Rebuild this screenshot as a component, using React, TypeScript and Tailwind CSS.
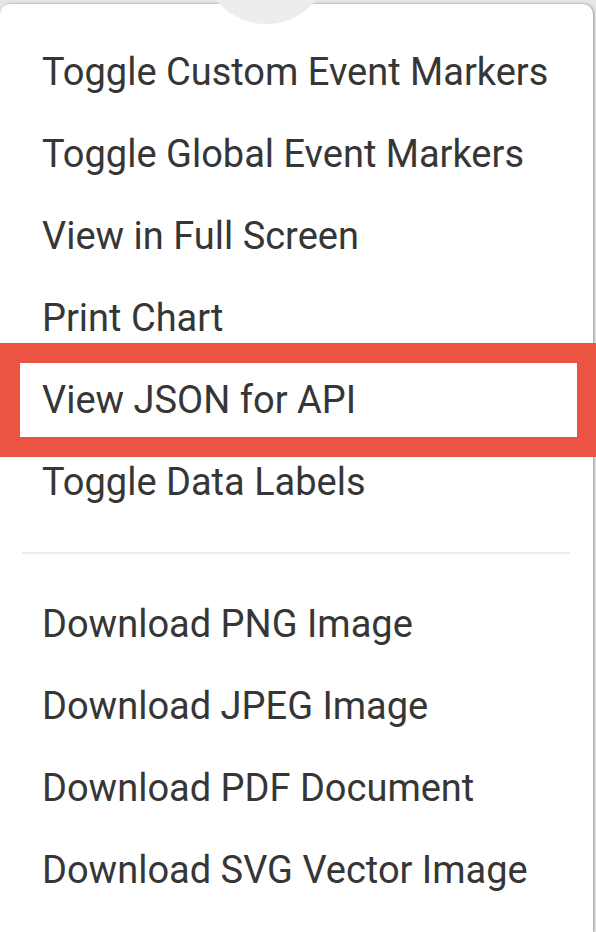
import React from 'react';

const topItems = [
  'Toggle Custom Event Markers',
  'Toggle Global Event Markers',
  'View in Full Screen',
  'Print Chart',
  'View JSON for API',
  'Toggle Data Labels',
];

const bottomItems = [
  'Download PNG Image',
  'Download JPEG Image',
  'Download PDF Document',
  'Download SVG Vector Image',
];

const MenuItem = ({ label, highlighted }: { label: string; highlighted?: boolean }) => (
  <div className="relative h-[82px] pl-[42px] text-[38px] leading-[82px] text-[#363636] whitespace-nowrap">
    {highlighted && (
      // annotation box drawn over the item
      <div className="absolute top-[-16px] bottom-[-16px] left-0 right-[-4px] border-[20px] border-[#eb5343]" />
    )}
    <span className="relative">{label}</span>
  </div>
);

export default function App() {
  return (
    <div
      className="relative h-[932px] w-[596px] overflow-hidden bg-[#e6e6e6] pt-[4px]"
      style={{ fontFamily: 'Roboto, "Liberation Sans", sans-serif' }}
    >
      <div className="h-full w-[593px] rounded-t-[10px] bg-white pt-[27px] shadow-[1px_0_3px_rgba(0,0,0,0.35)]">
        {topItems.map((label) => (
          <MenuItem key={label} label={label} highlighted={label === 'View JSON for API'} />
        ))}
        <div className="py-[29px] pl-[22px] pr-[23px]">
          <div className="h-[2px] bg-[#ebebeb]" />
        </div>
        {bottomItems.map((label) => (
          <MenuItem key={label} label={label} />
        ))}
      </div>
      {/* pointer bubble overlapping the top of the menu */}
      <div className="absolute left-[202px] top-[-104px] h-[128px] w-[128px] rounded-full bg-[#ededed]" />
    </div>
  );
}
